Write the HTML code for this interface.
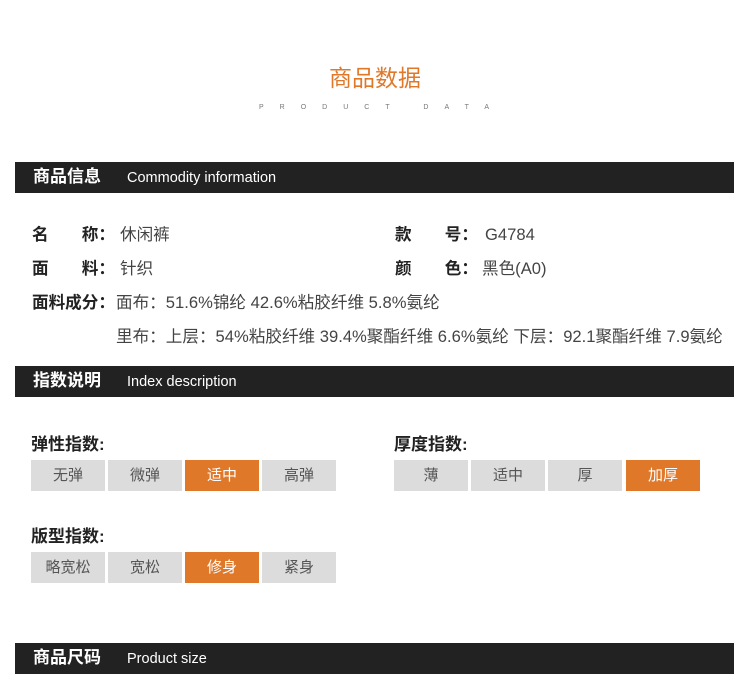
<!DOCTYPE html>
<html><head><meta charset="utf-8"><style>
*{margin:0;padding:0;box-sizing:border-box}
body{width:750px;height:687px;background:#fff;position:relative;font-family:"Liberation Sans","Noto Sans CJK SC",sans-serif;color:#444;overflow:hidden}
.a{position:absolute;white-space:nowrap}
.bar{position:absolute;left:15px;width:719px;height:31px;background:#222;color:#fff}
.bar b{position:absolute;left:18px;top:4px;font-size:17px;line-height:22px;font-weight:bold}
.bar span{position:absolute;left:112px;top:6px;font-size:14.5px;line-height:20px}
.r{font-size:16.6px;line-height:20px}
.lb{font-weight:bold;color:#222;display:inline-block}
.btn{position:absolute;width:74px;height:31px;background:#dcdcdc;color:#555;font-size:15px;text-align:center;line-height:31px}
.on{background:#e0782a;color:#fff}
.h{font-size:17px;font-weight:bold;color:#222}
</style></head><body>
<div class="a" style="left:0;width:750px;top:59px;text-align:center;font-size:23px;color:#e0782a">商品数据</div>
<div class="a" style="left:259px;top:104px;font-size:7px;letter-spacing:16px;color:#777">PRODUCT DATA</div>
<div class="bar" style="top:162px"><b>商品信息</b><span>Commodity information</span></div>
<div class="a r" style="left:32px;top:225px"><span class="lb" style="width:88px">名&emsp;&emsp;称：</span>休闲裤</div>
<div class="a r" style="left:395px;top:225px"><span class="lb" style="width:90px">款&emsp;&emsp;号：</span>G4784</div>
<div class="a r" style="left:32px;top:259px"><span class="lb" style="width:88px">面&emsp;&emsp;料：</span>针织</div>
<div class="a r" style="left:395px;top:259px"><span class="lb" style="width:87px">颜&emsp;&emsp;色：</span>黑色(A0)</div>
<div class="a r" style="left:32px;top:293px"><span class="lb" style="width:84px">面料成分：</span>面布：51.6%锦纶 42.6%粘胶纤维 5.8%氨纶</div>
<div class="a r" style="left:116px;top:327px">里布：上层：54%粘胶纤维 39.4%聚酯纤维 6.6%氨纶 下层：92.1聚酯纤维 7.9氨纶</div>
<div class="bar" style="top:366px"><b>指数说明</b><span>Index description</span></div>
<div class="a h" style="left:31px;top:430px">弹性指数:</div>
<div class="a h" style="left:394px;top:430px">厚度指数:</div>
<div class="btn" style="left:31px;top:460px">无弹</div>
<div class="btn" style="left:108px;top:460px">微弹</div>
<div class="btn on" style="left:185px;top:460px">适中</div>
<div class="btn" style="left:262px;top:460px">高弹</div>
<div class="btn" style="left:394px;top:460px">薄</div>
<div class="btn" style="left:471px;top:460px">适中</div>
<div class="btn" style="left:548px;top:460px">厚</div>
<div class="btn on" style="left:626px;top:460px">加厚</div>
<div class="a h" style="left:31px;top:522px">版型指数:</div>
<div class="btn" style="left:31px;top:552px">略宽松</div>
<div class="btn" style="left:108px;top:552px">宽松</div>
<div class="btn on" style="left:185px;top:552px">修身</div>
<div class="btn" style="left:262px;top:552px">紧身</div>
<div class="bar" style="top:643px"><b>商品尺码</b><span>Product size</span></div>
</body></html>
